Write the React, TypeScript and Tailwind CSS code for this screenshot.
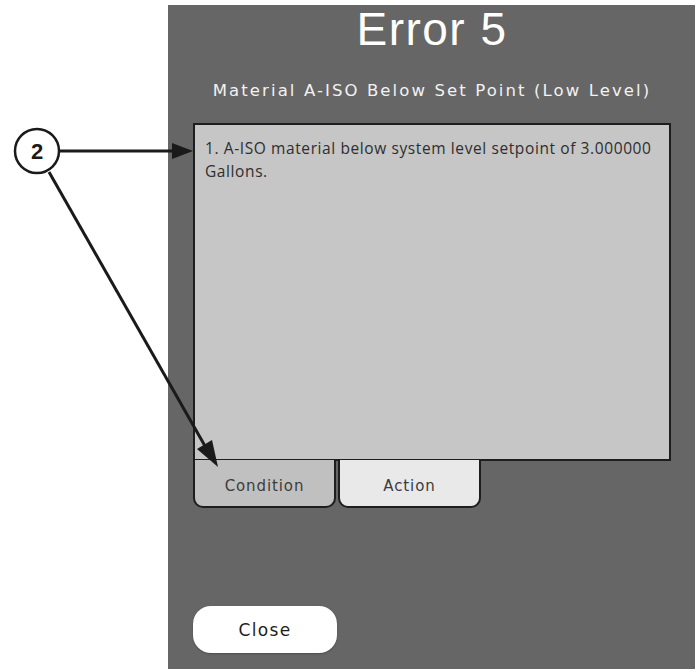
import React from 'react';

const Callout: React.FunctionComponent = () => (
  <svg className="absolute left-0 top-0 pointer-events-none" width="699" height="669" viewBox="0 0 699 669">
    <circle cx="37" cy="151" r="22" fill="white" stroke="#1a1a1a" strokeWidth="2.5" />
    <text x="37" y="159" textAnchor="middle" fontFamily="'Liberation Sans', Arial, sans-serif" fontWeight="700" fontSize="22" fill="#1a1a1a">
      2
    </text>
    <line x1="59" y1="151" x2="172" y2="151" stroke="#1a1a1a" strokeWidth="3" />
    <path d="M172,143 L193,151 L172,159 Z" fill="#1a1a1a" />
    <line x1="49" y1="172" x2="205" y2="446" stroke="#1a1a1a" strokeWidth="3" />
    <path d="M197,449 L218,467 L212,440 Z" fill="#1a1a1a" />
  </svg>
);

const App: React.FunctionComponent = () => {
  return (
    <div className="relative w-[699px] h-[669px] bg-white overflow-hidden font-['DejaVu_Sans',sans-serif]">
      <div className="ml-[168px] mt-[5px] w-[527px] h-[664px] bg-[#666666] flex flex-col pl-[25px] pr-[24px]">
        <h1 className="text-center text-white text-[46px] leading-none mt-[1px] tracking-[1.5px] font-['Liberation_Sans',sans-serif]">
          Error 5
        </h1>
        <p className="text-center text-[#f2f2f2] text-[16.5px] leading-none mt-[31px] tracking-[2.1px]">
          Material A-ISO Below Set Point (Low Level)
        </p>

        <div className="mt-[23px] h-[338px] border-2 border-[#1e1e1e] bg-[#c6c6c6] px-[10px] pt-[12px]">
          <p className="text-[#2e2e2e] text-[15.5px] leading-[23px] tracking-[0.6px] font-['Open_Sans',sans-serif]">
            1. A-ISO material below system level setpoint of 3.000000 Gallons.
          </p>
        </div>

        <div className="flex gap-[2px] -mt-[1px]">
          <button className="w-[143px] h-[48px] bg-[#c0c0c0] border-2 border-t-0 border-[#1e1e1e] rounded-b-[10px] text-[15px] tracking-[0.9px] text-[#3c3c3c] pt-[7px]">
            Condition
          </button>
          <button className="w-[143px] h-[48px] bg-[#e9e9e9] border-2 border-t-0 border-[#1e1e1e] rounded-b-[10px] text-[15px] tracking-[0.9px] text-[#3c3c3c] pt-[7px]">
            Action
          </button>
        </div>

        <div className="flex-1" />
        <button className="mb-[16px] w-[144px] h-[47px] bg-white rounded-[18px] text-[17px] tracking-[1.3px] text-[#1e1e1e] shadow-[0_1px_2px_rgba(0,0,0,0.25)] pt-[3px]">
          Close
        </button>
      </div>
      <Callout />
    </div>
  );
};

export default App;
